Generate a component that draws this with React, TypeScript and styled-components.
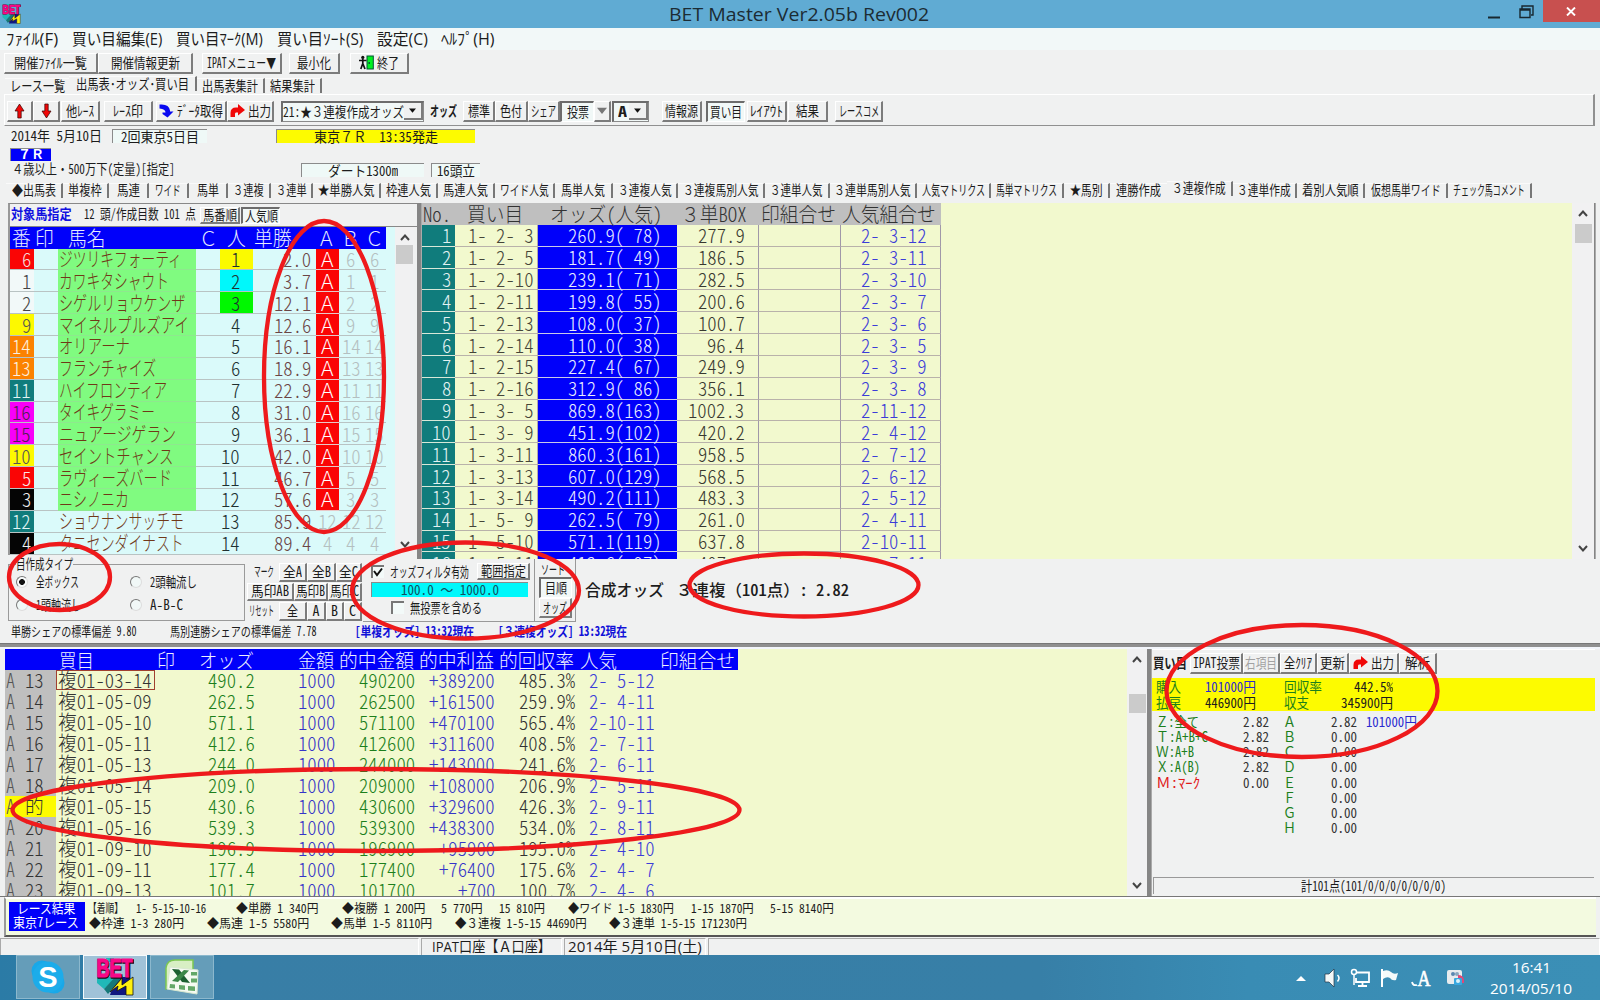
import React, { useLayoutEffect, useRef, useState } from "react";
import styled, { createGlobalStyle, css } from "styled-components";

const GlobalStyle = createGlobalStyle`
  *, *::before, *::after { box-sizing: border-box; }
  html, body { margin: 0; padding: 0; overflow: hidden; }
  body {
    font-family: "Noto Sans CJK JP", sans-serif;
    color: #1c1c1c;
    background: #f0f1f1;
  }
`;

const FACE = "#f0f1f1";
const PAPER = "#f2f9ce";
const BLUE = "#0000fa";
const GREEN = "#1c7f1c";
const TEAL = "#107c7c";

/* ---------- text squeezed to the cell grid of the bitmap font ---------- */

const FitBox = styled.span<{ $w: number; $ml: number }>`
  display: block;
  flex: none;
  width: ${(p) => p.$w}px;
  margin-left: ${(p) => p.$ml}px;
  line-height: 1;
`;

const FitInner = styled.span<{ $s: number; $c?: string; $b: number; $ui?: boolean }>`
  display: inline-block;
  white-space: pre;
  transform-origin: 0 50%;
  vertical-align: top;
  line-height: 1;
  font-family: ${(p) => (p.$ui ? '"Open Sans", "Noto Sans CJK JP", sans-serif' : "inherit")};
  font-size: ${(p) => p.$s}px;
  font-weight: ${(p) => p.$b};
  color: ${(p) => p.$c || "inherit"};
`;

const Half = styled.span`
  font-feature-settings: "hwid" 1;
`;

type TProps = { t: string; w: number; ml?: number; s?: number; c?: string; b?: number; ui?: boolean };

function T({ t, w, ml = 0, s = 14, c, b = 400, ui }: TProps) {
  const ref = useRef<HTMLSpanElement>(null);
  const [k, setK] = useState(1);
  useLayoutEffect(() => {
    if (ref.current && ref.current.offsetWidth) setK(w / ref.current.offsetWidth);
  }, [t, w, s, b]);
  return (
    <FitBox $w={w} $ml={ml}>
      <FitInner ref={ref} $s={s} $c={c} $b={b} $ui={ui} style={{ transform: `scaleX(${k})` }}>
        {ui ? t : t.split(/([\x20-\x7e]+)/).map((part, i) => (i % 2 ? <Half key={i}>{part}</Half> : part))}
      </FitInner>
    </FitBox>
  );
}

const units = (t: string) => [...t].reduce((n, ch) => n + (ch.charCodeAt(0) > 255 ? 2 : 1), 0);
const G = ({ t, c, ml = 0, b = 300 }: { t: string; c?: string; ml?: number; b?: number }) => (
  <T t={t} w={units(t) * 9.37} s={20} c={c} ml={ml} b={b} />
);

/* ---------- shared parts ---------- */

const Window = styled.div`
  width: 1600px;
  height: 1000px;
  overflow: hidden;
  position: relative;
  display: flex;
  flex-direction: column;
  background: ${FACE};
`;

const Line = styled.div<{ $h: number; $pl?: number; $pb?: number }>`
  display: flex;
  flex: none;
  align-items: center;
  height: ${(p) => p.$h}px;
  padding-left: ${(p) => p.$pl || 0}px;
  padding-bottom: ${(p) => p.$pb || 0}px;
`;

const Button = styled.div<{ $w: number; $h: number; $ml: number; $down?: boolean; $off?: boolean }>`
  display: flex;
  flex: none;
  align-items: center;
  justify-content: center;
  gap: 3px;
  width: ${(p) => p.$w}px;
  height: ${(p) => p.$h}px;
  margin-left: ${(p) => p.$ml}px;
  color: ${(p) => (p.$off ? "#a2a2a2" : "#1c1c1c")};
  background: ${(p) => (p.$down ? "#f1f8f7" : FACE)};
  ${(p) =>
    p.$down
      ? css`
          border-top: 2px solid #6c6c6c;
          border-left: 2px solid #6c6c6c;
          border-right: 1px solid #fff;
          border-bottom: 1px solid #fff;
        `
      : css`
          border-top: 1px solid #fff;
          border-left: 1px solid #fff;
          border-right: 2px solid #7c7c7c;
          border-bottom: 2px solid #7c7c7c;
        `}
`;

type BtnProps = {
  w: number; h?: number; ml?: number; t?: string; tw?: number; down?: boolean; off?: boolean;
  b?: number; children?: React.ReactNode;
};
const Btn = ({ w, h = 21, ml = 0, t, tw = 20, down, off, b, children }: BtnProps) => (
  <Button $w={w} $h={h} $ml={ml} $down={down} $off={off}>
    {children}
    {t && <T t={t} w={tw} b={b} />}
  </Button>
);

const Sunken = styled.div<{ $w: number; $ml: number; $bg: string; $h?: number }>`
  display: flex;
  flex: none;
  align-items: center;
  justify-content: center;
  width: ${(p) => p.$w}px;
  height: ${(p) => p.$h || 14}px;
  margin-left: ${(p) => p.$ml}px;
  background: ${(p) => p.$bg};
  border-top: 1px solid #8b8b8b;
  border-left: 1px solid #8b8b8b;
`;

const Combo = styled.div<{ $w: number; $ml: number }>`
  display: flex;
  flex: none;
  align-items: center;
  justify-content: space-between;
  width: ${(p) => p.$w}px;
  height: 21px;
  margin-left: ${(p) => p.$ml}px;
  border: 2px solid #6c6c6c;
  border-right: 1px solid #8b8b8b;
  border-bottom: 1px solid #8b8b8b;
  background: #f1f8f7;
`;

const Drop = styled.div`
  display: flex;
  align-items: center;
  justify-content: center;
  width: 19px;
  height: 17px;
  background: ${FACE};
  border-right: 2px solid #7c7c7c;
  border-bottom: 2px solid #7c7c7c;
`;

const DownTri = ({ w = 7, c = "#101010" }: { w?: number; c?: string }) => (
  <svg width={w} height={w * 0.75} viewBox="0 0 8 6"><path d="M0 0.5H8L4 5.5Z" fill={c} /></svg>
);

const OutArrow = () => (
  <svg width="15" height="16" viewBox="0 0 15 16">
    <path d="M0.5 14V10Q0.5 4.5 6 4.5H8V1L15 7L8 12.5V9.500H6Q5 9.500 5 11V14Z" fill="#f00808" />
  </svg>
);
const InArrow = () => (
  <svg width="15" height="16" viewBox="0 0 15 16">
    <path d="M0.5 1.500Q10 0.500 11 7.500V8.500H14.500L8.500 14.500L3.500 11V9.500H6.500Q6.500 6 0.500 5.500Z" fill="#0808f0" />
  </svg>
);
const RedArrow = ({ down }: { down?: boolean }) => (
  <svg width="11" height="16" viewBox="0 0 11 16">
    <path
      d={down ? "M3.8 1H7.2V8H10L5.5 15L1 8H3.8Z" : "M3.8 15H7.2V8H10L5.5 1L1 8H3.8Z"}
      fill="#f00808" stroke="#300" strokeWidth="0.7"
    />
  </svg>
);
const ExitIcon = () => (
  <svg width="15" height="15" viewBox="0 0 15 15">
    <rect x="8" y="1" width="6.3" height="13" fill="#00f020" stroke="#053" />
    <rect x="9.5" y="7" width="1.4" height="2" fill="#053" />
    <circle cx="3.8" cy="2.4" r="1.6" fill="#111" />
    <path d="M0 5.5H7.5M3.8 4V9M3.8 8.5L1.8 14M3.8 8.5L6 14" stroke="#111" strokeWidth="1.7" fill="none" />
  </svg>
);
const BetLogo = ({ w, h }: { w: number; h: number }) => (
  <svg width={w} height={h} viewBox="0 0 38 38" preserveAspectRatio="none">
    <path d="M10 0H18V4H10ZM1 19H20L8 31L1 25Z" fill="#20b8b8" />
    <path d="M20 19H34V22L30 37H14Z" fill="#101880" />
    <path d="M8 31L20 18H27L12 36Z" fill="#157878" />
    <text x="19.500" y="19.500" textAnchor="middle" textLength="37" lengthAdjust="spacingAndGlyphs"
      fontFamily="Liberation Sans" fontWeight="700" fontSize="25" fill="#200818" stroke="#200818" strokeWidth="1.500">BET</text>
    <text x="18.500" y="18.500" textAnchor="middle" textLength="36" lengthAdjust="spacingAndGlyphs"
      fontFamily="Liberation Sans" fontWeight="700" fontSize="25" fill="#f80888" stroke="#f80888" strokeWidth="1.200">BET</text>
    <path d="M14 34L26 20L26 27L37 19V37H30V28L21 33L22 28Z" fill="#fff010" stroke="#111" strokeWidth="0.800" />
  </svg>
);

/* ---------- title bar and menus ---------- */

const TitleBar = styled.div`
  display: flex;
  flex: none;
  align-items: center;
  height: 28px;
  padding: 0 0 1px 2px;
  background: #60abd3;
  color: #1c2c34;
`;
const CloseBox = styled.div`
  display: flex;
  align-items: center;
  justify-content: center;
  align-self: flex-start;
  width: 58px;
  height: 22px;
  margin-left: 9px;
  background: #c8504f;
`;
const Caption = styled.svg`
  flex: none;
  margin-left: 555px;
`;
const MenuBar = styled.div`
  display: flex;
  flex: none;
  align-items: center;
  height: 22px;
  padding: 2px 0 0 6px;
  background: #f2f8f8;
`;
const Tab = styled.div<{ $w: number; $up?: boolean; $line?: boolean }>`
  display: flex;
  flex: none;
  align-items: center;
  justify-content: center;
  width: ${(p) => p.$w}px;
  height: 15px;
  margin-bottom: ${(p) => (p.$up ? 3 : 0)}px;
  border-right: ${(p) => (p.$line === false ? "0" : "2px solid #777")};
  border-top: 1px solid #fafafa;
`;
const ToolFrame = styled.div`
  display: flex;
  flex: none;
  align-items: center;
  height: 32px;
  margin: 0 5px 0 4px;
  padding: 2px 0 0 2px;
  border-top: 1px solid #fff;
  border-left: 1px solid #fff;
  border-right: 2px solid #909090;
  border-bottom: 1px solid #909090;
`;

const MENUS: [string, number, number][] = [
  ["ﾌｧｲﾙ(F)", 52, 0], ["買い目編集(E)", 90, 14], ["買い目ﾏｰｸ(M)", 87, 14],
  ["買い目ｿｰﾄ(S)", 86, 14], ["設定(C)", 51, 14], ["ﾍﾙﾌﾟ(H)", 54, 13],
];

/* label, label width, tab width */
const ODDS_TABS: [string, number, number][] = [
  ["◆出馬表", 44, 57], ["単複枠", 34, 46], ["馬連", 23, 40], ["ワイド", 26, 40], ["馬単", 22, 39],
  ["３連複", 31, 43], ["３連単", 31, 42], ["★単勝人気", 57, 68], ["枠連人気", 45, 57], ["馬連人気", 45, 57],
  ["ワイド人気", 49, 60], ["馬単人気", 44, 58], ["３連複人気", 54, 65], ["３連複馬別人気", 76, 87],
  ["３連単人気", 53, 65], ["３連単馬別人気", 77, 87], ["人気マトリクス", 63, 74], ["馬単マトリクス", 61, 73],
  ["★馬別", 33, 46], ["連勝作成", 45, 57], ["３連複作成", 54, 66], ["３連単作成", 54, 64],
  ["着別人気順", 57, 68], ["仮想馬単ワイド", 70, 83], ["チェック馬コメント", 72, 84],
];

/* ---------- upper tables ---------- */

const Row = styled.div<{ $h: number; $bg?: string }>`
  display: flex;
  flex: none;
  height: ${(p) => p.$h}px;
  background: ${(p) => p.$bg || "transparent"};
`;
const Cell = styled.div<{ $w: number; $bg?: string; $rule?: string; $side?: string; $at?: string; $pr?: number }>`
  display: flex;
  flex: none;
  align-items: center;
  justify-content: ${(p) => p.$at || "center"};
  width: ${(p) => p.$w}px;
  padding-right: ${(p) => p.$pr || 0}px;
  background: ${(p) => p.$bg || "transparent"};
  border-bottom: ${(p) => (p.$rule ? `1px solid ${p.$rule}` : "0")};
  border-right: ${(p) => (p.$side ? `1px solid ${p.$side}` : "0")};
`;
const Clip = styled.div<{ $w: number; $bg: string; $ml?: number }>`
  flex: none;
  width: ${(p) => p.$w}px;
  margin-left: ${(p) => p.$ml || 0}px;
  overflow: hidden;
  background: ${(p) => p.$bg};
`;
const Main = styled.div`
  display: flex;
  flex: none;
  height: 356px;
`;
const HorsePanel = styled.div`
  flex: none;
  width: 409px;
  height: 352px;
  margin-left: 8px;
  border-top: 1px solid #888;
  border-left: 2px solid #999;
`;
const HorseBody = styled.div`
  display: flex;
  height: 329px;
  border-top: 1px solid #888;
`;
const ScrollBar = styled.div<{ $w: number; $bg?: string }>`
  display: flex;
  flex: none;
  flex-direction: column;
  justify-content: space-between;
  align-items: center;
  width: ${(p) => p.$w}px;
  padding: 7px 0;
  background: ${(p) => p.$bg || "#f1f1f2"};
`;
const Thumb = styled.div<{ $mt: number }>`
  width: 17px;
  height: 19px;
  margin-top: ${(p) => p.$mt}px;
  background: #cbcbcb;
`;
const Col = styled.div`
  display: flex;
  flex-direction: column;
  align-items: center;
`;
const Chevron = ({ down }: { down?: boolean }) => (
  <svg width="10" height="7" viewBox="0 0 10 7">
    <path d={down ? "M1 1L5 5.5L9 1" : "M1 6L5 1.5L9 6"} fill="none" stroke="#444" strokeWidth="2" />
  </svg>
);
const Scroll = ({ w, mt }: { w: number; mt: number }) => (
  <ScrollBar $w={w}>
    <Col><Chevron /><Thumb $mt={mt} /></Col>
    <Chevron down />
  </ScrollBar>
);
const VSplit = styled.div<{ $w: number }>`
  flex: none;
  width: ${(p) => p.$w}px;
  background: #858585;
  border-right: 1px solid #aaa;
`;

const HORSES: [string, string, string, string, string, string][] = [
  ["6", "#fa0505", "#f4dcdc", "ジツリキフォーティ", "1", "2.0"],
  ["1", "#f2f9f9", "#444", "カワキタシャウト", "2", "3.7"],
  ["2", "#f2f9f9", "#444", "シゲルリョウケンザ", "3", "12.1"],
  ["9", "#fdf900", "#555", "マイネルプルズアイ", "4", "12.6"],
  ["14", "#fb8200", "#fbeedd", "オリアーナ", "5", "16.1"],
  ["13", "#fb8200", "#fbeedd", "フランチャイズ", "6", "18.9"],
  ["11", TEAL, "#e0f4f4", "ハイフロンティア", "7", "22.9"],
  ["16", "#f800f8", "#502050", "タイキグラミー", "8", "31.0"],
  ["15", "#f800f8", "#502050", "ニュアージゲラン", "9", "36.1"],
  ["10", "#fdf900", "#555", "セイントチャンス", "10", "42.0"],
  ["5", "#fa0505", "#fbe4e4", "ラヴィーズバード", "11", "46.7"],
  ["3", "#050505", "#f0f0f0", "ニシノニカ", "12", "57.6"],
  ["12", TEAL, "#e0f4f4", "ショウナンサッチモ", "13", "85.9"],
  ["4", "#050505", "#f0f0f0", "タニセンダイナスト", "14", "89.4"],
];
const NAME_W = [123, 110, 126, 130, 71, 97, 108, 96, 117, 114, 113, 70, 125, 125];
const POP_BG = ["#fbfa00", "#00f8fb", "#00f800"];
const CYAN = "#dafafa";
const RULE = "#b9c3c3";

const ODDS: [string, string, string, string][] = [
  ["1- 2- 3", "260.9( 78)", "277.9", "2- 3-12"],
  ["1- 2- 5", "181.7( 49)", "186.5", "2- 3-11"],
  ["1- 2-10", "239.1( 71)", "282.5", "2- 3-10"],
  ["1- 2-11", "199.8( 55)", "200.6", "2- 3- 7"],
  ["1- 2-13", "108.0( 37)", "100.7", "2- 3- 6"],
  ["1- 2-14", "110.0( 38)", "96.4", "2- 3- 5"],
  ["1- 2-15", "227.4( 67)", "249.9", "2- 3- 9"],
  ["1- 2-16", "312.9( 86)", "356.1", "2- 3- 8"],
  ["1- 3- 5", "869.8(163)", "1002.3", "2-11-12"],
  ["1- 3- 9", "451.9(102)", "420.2", "2- 4-12"],
  ["1- 3-11", "860.3(161)", "958.5", "2- 7-12"],
  ["1- 3-13", "607.0(129)", "568.5", "2- 6-12"],
  ["1- 3-14", "490.2(111)", "483.3", "2- 5-12"],
  ["1- 5- 9", "262.5( 79)", "261.0", "2- 4-11"],
  ["1- 5-10", "571.1(119)", "637.8", "2-10-11"],
  ["1- 5-11", "412.6( 97)", "407.1", "2- 7-11"],
];

function HorseTable() {
  const head: [string, number][] = [
    ["番", 22], ["印", 25], ["馬名", 60], ["", 79], ["Ｃ", 24], ["人", 33], ["単勝", 40], ["", 21], ["Ａ", 24], ["Ｂ", 24], ["Ｃ", 24],
  ];
  return (
    <Clip $w={385} $bg={CYAN}>
      <Row $h={21.5}>
        {head.map(([t, w], i) => (
          <Cell key={i} $w={w} $bg={BLUE}>{t && <G t={t} c="#e8ecff" />}</Cell>
        ))}
      </Row>
      {HORSES.map(([no, bg, fg, name, pop, odds], i) => {
        const on = i < 12;
        return (
          <Row key={no} $h={21.87}>
            <Cell $w={24} $bg={bg} $rule={RULE} $at="flex-end" $pr={3}><G t={no} c={fg} /></Cell>
            <Cell $w={24} $rule={RULE} />
            <Cell $w={138} $bg={on ? "#80fb80" : undefined} $rule={on ? "#8ee88e" : RULE} $at="flex-start">
              <T t={name} w={NAME_W[i]} s={20} c="#703818" b={300} ml={1} />
            </Cell>
            <Cell $w={24} $rule={RULE} />
            <Cell $w={33} $bg={POP_BG[i]} $rule={RULE} $at="flex-end" $pr={13}>
              <G t={pop} c="#203030" />
            </Cell>
            <Cell $w={63} $rule={RULE} $at="flex-end" $pr={5}><G t={odds} c="#6b4545" /></Cell>
            {[23, 24, 23].map((w, k) =>
              on && k === 0 ? (
                <Cell key={k} $w={w} $bg="#fa0505" $rule="#e8c8c8"><G t="Ａ" c="#fff" /></Cell>
              ) : (
                <Cell key={k} $w={w} $rule={RULE}><G t={no} c="#b4bfc0" /></Cell>
              )
            )}
          </Row>
        );
      })}
    </Clip>
  );
}

function OddsTable() {
  const head: [string, number, number][] = [
    ["No.", 33, 3], ["買い目", 83, 2], ["オッズ(人気)", 138.5, 3], ["３単BOX", 82, 8], ["印組合せ", 82, 3], ["人気組合せ", 100.5, 3],
  ];
  return (
    <Clip $w={1150} $bg={PAPER}>
      <Row $h={22}>
        {head.map(([t, w, pr]) => (
          <Cell key={t} $w={w} $bg="#bfbfbf" $pr={pr}><G t={t} c="#333" /></Cell>
        ))}
      </Row>
      {ODDS.map(([a, b, c, d], i) => (
        <Row key={a} $h={21.83}>
          <Cell $w={33} $bg={TEAL} $rule="#d8e8d8" $at="flex-end" $pr={4}><G t={String(i + 1)} c="#e2f2f2" /></Cell>
          <Cell $w={83} $rule="#b9b2aa" $side="#b0a8b0" $at="flex-end" $pr={3}><G t={a} c="#454538" /></Cell>
          <Cell $w={138.5} $bg={BLUE} $rule="#c8c8e8" $at="flex-end" $pr={15}><G t={b} c="#e8ecff" /></Cell>
          <Cell $w={82} $rule="#b9b2aa" $side="#a098a8" $at="flex-end" $pr={13}><G t={c} c="#383830" /></Cell>
          <Cell $w={82} $rule="#b9b2aa" $side="#a098a8" />
          <Cell $w={100.5} $rule="#b9b2aa" $side="#a098a8" $at="flex-end" $pr={13}><G t={d} c="#3c3cd8" /></Cell>
        </Row>
      ))}
    </Clip>
  );
}

/* ---------- control strip ---------- */

const Strip = styled.div`
  display: flex;
  flex: none;
  height: 63px;
`;
const Group = styled.fieldset`
  flex: none;
  width: 237px;
  height: 64px;
  margin: -2px 0 0 8px;
  padding: 0 0 0 7px;
  border: 1px solid #9a9a9a;
`;
const Legend = styled.legend`
  height: 14px;
  padding: 0;
`;
const RadioDot = styled.span<{ $on?: boolean; $ml?: number }>`
  flex: none;
  width: 12px;
  height: 12px;
  margin-left: ${(p) => p.$ml || 0}px;
  border-radius: 50%;
  border: 1px solid #777;
  border-right-color: #ddd;
  border-bottom-color: #ddd;
  background: ${(p) => (p.$on ? "radial-gradient(circle, #111 0 2.6px, #f8fbfb 3.2px)" : "#f1f8f7")};
`;
const Marks = styled.div`
  flex: none;
  width: 118px;
  padding: 3px 0 0 2px;
`;
const Filter = styled.div`
  flex: none;
  width: 172px;
  padding: 4px 0 0 8px;
  border-right: 1px solid #999;
  border-bottom: 1px solid #999;
`;
const SortBox = styled.div`
  flex: none;
  width: 41px;
  padding: 4px 0 0 4px;
  border-right: 1px solid #999;
  border-bottom: 1px solid #999;
`;
const Check = styled.span<{ $ml?: number }>`
  display: flex;
  flex: none;
  width: 13px;
  height: 13px;
  margin-left: ${(p) => p.$ml || 0}px;
  background: #f3faf9;
  border-top: 2px solid #777;
  border-left: 2px solid #777;
`;
const Total = styled.div`
  display: flex;
  align-items: center;
  padding: 0 0 4px 9px;
`;
const HSplit = styled.div`
  flex: none;
  height: 6px;
  background: #8f8f8f;
  border-top: 1px solid #777;
  border-bottom: 2px solid #f2f5fb;
`;

/* ---------- bet list and summary ---------- */

const Lower = styled.div`
  display: flex;
  flex: none;
  height: 248px;
  padding: 0 5px;
  border-bottom: 1px solid #777;
`;
const Framed = styled.div<{ $on?: boolean }>`
  display: flex;
  align-items: center;
  height: 20px;
  width: 99px;
  padding-left: 1px;
  border: 1px solid ${(p) => (p.$on ? "#a04030" : "transparent")};
`;
const BETS: [string, string, string, string, string, string, string][] = [
  ["13", "複01-03-14", "490.2", "490200", "+389200", "485.3%", "2- 5-12"],
  ["14", "複01-05-09", "262.5", "262500", "+161500", "259.9%", "2- 4-11"],
  ["15", "複01-05-10", "571.1", "571100", "+470100", "565.4%", "2-10-11"],
  ["16", "複01-05-11", "412.6", "412600", "+311600", "408.5%", "2- 7-11"],
  ["17", "複01-05-13", "244.0", "244000", "+143000", "241.6%", "2- 6-11"],
  ["18", "複01-05-14", "209.0", "209000", "+108000", "206.9%", "2- 5-11"],
  ["的", "複01-05-15", "430.6", "430600", "+329600", "426.3%", "2- 9-11"],
  ["20", "複01-05-16", "539.3", "539300", "+438300", "534.0%", "2- 8-11"],
  ["21", "複01-09-10", "196.9", "196900", "+95900", "195.0%", "2- 4-10"],
  ["22", "複01-09-11", "177.4", "177400", "+76400", "175.6%", "2- 4- 7"],
  ["23", "複01-09-13", "101.7", "101700", "+700", "100.7%", "2- 4- 6"],
];
const BET_HEAD: [string, number, number][] = [
  ["買目", 35, 54], ["印", 18, 63], ["オッズ", 55, 24], ["金額", 36, 44], ["的中金額", 75, 5],
  ["的中利益", 75, 5], ["的回収率", 75, 5], ["人気", 37, 6], ["印組合せ", 75, 43],
];

function BetTable() {
  return (
    <Clip $w={1122} $bg={PAPER}>
      <Row $h={21}>
        <Cell $w={733} $bg={BLUE} $at="flex-start">
          {BET_HEAD.map(([t, w, ml]) => <T key={t} t={t} w={w} ml={ml} s={19} c="#eef0ff" b={300} />)}
        </Cell>
      </Row>
      {BETS.map(([no, code, odds, pay, gain, rate, pop], i) => {
        const hit = no === "的";
        return (
          <Row key={code} $h={20.95}>
            <Cell $w={51} $bg={hit ? "#fdfb00" : "#bfbfbf"} $at="flex-start">
              <T t="A" w={9} s={20} ml={1} c="#555" b={300} /><G t={no} ml={10} c="#333" />
            </Cell>
            <Cell $w={99} $at="flex-start"><Framed $on={i === 0}><G t={code} c="#333" /></Framed></Cell>
            <Cell $w={100} $at="flex-end"><G t={odds} c={GREEN} /></Cell>
            <Cell $w={80} $at="flex-end"><G t="1000" c="#3535c8" /></Cell>
            <Cell $w={80} $at="flex-end"><G t={pay} c={GREEN} /></Cell>
            <Cell $w={80} $at="flex-end"><G t={gain} c="#3535c8" /></Cell>
            <Cell $w={80} $at="flex-end"><G t={rate} c="#333" /></Cell>
            <Cell $w={80} $at="flex-end"><G t={pop} c="#3c3cd8" /></Cell>
          </Row>
        );
      })}
    </Clip>
  );
}

const Summary = styled.div`
  display: flex;
  flex: 1;
  flex-direction: column;
  border-top: 1px solid #fff;
`;
const Yellow = styled.div`
  flex: none;
  height: 33px;
  margin: 2px 0 3px;
  background: #fdfb00;
`;
const Foot = styled.div`
  display: flex;
  flex: none;
  align-items: center;
  height: 17px;
  margin: auto 1px 2px 1px;
  padding-left: 147px;
  border-top: 1px solid #999;
  border-left: 1px solid #999;
`;
/* key, key width, odds */
const GROUPS: [string, number, string][] = [
  ["Ｚ:全て", 43, "2.82"], ["Ｔ:A+B+C", 52, "2.82"], ["Ｗ:A+B", 38, "2.82"], ["Ｘ:A(B)", 44, "2.82"],
  ["Ｍ:ﾏｰｸ", 44, "0.00"], ["", 0, ""], ["", 0, ""], ["", 0, ""],
];

function BetSummary() {
  return (
    <Summary>
      <Line $h={26} $pl={1}>
        <T t="買い目" w={34} b={700} />
        <Btn ml={3} w={53} t="IPAT投票" tw={47} />
        <Btn w={37} t="右項目" tw={32} off />
        <Btn w={37} t="全ｸﾘｱ" tw={28} />
        <Btn w={32} t="更新" tw={25} />
        <Btn w={50} t="出力" tw={23}><OutArrow /></Btn>
        <Btn w={38} t="解析" tw={25} />
      </Line>
      <Yellow>
        <Line $h={18} $pl={4}>
          <T t="購入" w={25} c={GREEN} /><T t="101000円" w={51} ml={24} c="#2a2ad0" />
          <T t="回収率" w={38} ml={28} c={GREEN} /><T t="442.5%" w={39} ml={32} />
        </Line>
        <Line $h={13} $pl={4}>
          <T t="払戻" w={25} c={GREEN} /><T t="446900円" w={51} ml={24} />
          <T t="収支" w={25} ml={28} c={GREEN} /><T t="345900円" w={52} ml={32} />
        </Line>
      </Yellow>
      {GROUPS.map(([k, kw, v], i) => (
        <Line key={i} $h={15.25} $pl={4}>
          <Cell $w={87} $at="flex-start">{k && <T t={k} w={kw} c={i === 4 ? "#e01818" : GREEN} />}</Cell>
          <Cell $w={26}>{v && <T t={v} w={26} c="#333" />}</Cell>
          <T t={"ＡＢＣＤＥＦＧＨ"[i]} w={13} ml={14} c={GREEN} />
          <T t={i === 0 ? "2.82" : "0.00"} w={26} ml={35} c="#333" />
          {i === 0 && <T t="101000円" w={51} ml={9} c="#2a2ad0" />}
        </Line>
      ))}
      <Foot><T t="計101点(101/0/0/0/0/0/0/0)" w={145} /></Foot>
    </Summary>
  );
}

/* ---------- results, status bar, taskbar ---------- */

const Results = styled.div`
  display: flex;
  flex: none;
  height: 40px;
  margin: 0 4px;
  padding: 3px 0 0 3px;
  background: #f3fae0;
  border-top: 2px solid #fff;
  border-left: 2px solid #999;
  border-bottom: 2px solid #555;
`;
const ResultBadge = styled.div`
  flex: none;
  width: 76px;
  height: 29px;
  padding: 0 4px;
  background: ${BLUE};
`;
const StatusBar = styled.div`
  display: flex;
  flex: none;
  height: 18px;
  padding-top: 1px;
`;
const StatusCell = styled.div<{ $w: number }>`
  display: flex;
  flex: none;
  align-items: center;
  width: ${(p) => p.$w}px;
  margin-right: 2px;
  border-top: 1px solid #aaa;
  border-left: 1px solid #aaa;
  border-right: 1px solid #fff;
`;
const TaskBar = styled.div`
  display: flex;
  flex: none;
  height: 45px;
  padding-left: 16px;
  background: linear-gradient(90deg, #2b7ba6 0%, #387ea6 14%, #377fa7 65%, #398cb4 78%, #3b8fb6 100%);
`;
const TaskItem = styled.div<{ $on?: boolean }>`
  display: flex;
  flex: none;
  align-items: center;
  justify-content: center;
  width: 64px;
  height: 44px;
  margin-right: 3px;
  background: ${(p) => (p.$on ? "#a0c2d8" : "#659db9")};
  border: 1px solid ${(p) => (p.$on ? "#f4fafc" : "#8cb8cd")};
`;
const Tray = styled.div`
  display: flex;
  align-items: center;
  margin-left: auto;
  margin-right: 28px;
`;
const Clock = styled.div`
  display: flex;
  flex-direction: column;
  align-items: center;
  gap: 5px;
  width: 82px;
  margin-left: 26px;
  padding-top: 4px;
  color: #fff;
`;
const Marker = styled.svg`
  position: absolute;
  left: 0;
  top: 0;
  pointer-events: none;
`;

/* text, width, left gap */
const RESULT1: [string, number, number][] = [
  ["【着順】", 35, 3], ["1- 5-15-10-16", 70, 13], ["◆単勝 1 340円", 83, 30], ["◆複勝 1 200円", 84, 23],
  ["5 770円", 42, 15], ["15 810円", 46, 16], ["◆ワイド 1-5 1830円", 106, 23], ["1-15 1870円", 63, 17], ["5-15 8140円", 64, 16],
];
const RESULT2: [string, number, number][] = [
  ["◆枠連 1-3 280円", 95, 4], ["◆馬連 1-5 5580円", 102, 23], ["◆馬単 1-5 8110円", 101, 22],
  ["◆３連複 1-5-15 44690円", 132, 23], ["◆３連単 1-5-15 171230円", 138, 22],
];
const RINGS = [
  [324, 376.5, 60, 155.5], [59.5, 577, 50.5, 33], [465.5, 590.5, 113.5, 48],
  [804, 585, 114.5, 31.5], [376, 810, 363.5, 41], [1302, 691, 135.5, 66],
];

export default function App() {
  return (
    <Window>
      <GlobalStyle />
      <TitleBar>
        <BetLogo w={19} h={20} />
        <T t="BET Master Ver2.05b Rev002" w={260} ml={648} s={18} ui />
        <Caption width="50" height="20" viewBox="0 0 50 20">
          <path d="M4 13.500H16" stroke="#182830" strokeWidth="2" />
          <path d="M38 4.500V2H49V11H47M36 5H46V13.500H36Z M36 6H46" stroke="#182830" strokeWidth="1.4" fill="none" />
        </Caption>
        <CloseBox>
          <svg width="10" height="9" viewBox="0 0 10 9"><path d="M1 0.500L9 8.500M9 0.500L1 8.500" stroke="#fff" strokeWidth="1.9" /></svg>
        </CloseBox>
      </TitleBar>
      <MenuBar>
        {MENUS.map(([t, w, ml]) => <T key={t} t={t} w={w} ml={ml} s={15.5} ui />)}
      </MenuBar>
      <Line $h={26} $pl={4}>
        <Btn w={94} t="開催ﾌｧｲﾙ一覧" tw={73} />
        <Btn w={95} t="開催情報更新" tw={69} />
        <Btn ml={9} w={80} t="IPATメニュー▼" tw={69} />
        <Btn ml={7} w={51} t="最小化" tw={34} />
        <Btn ml={10} w={59} t="終了" tw={22}><ExitIcon /></Btn>
      </Line>
      <Line $h={18} $pl={5}>
        <Tab $w={64} $line={false}><T t="レース一覧" w={55} /></Tab>
        <Tab $w={128} $up><T t="出馬表･オッズ･買い目" w={113} /></Tab>
        <Tab $w={68}><T t="出馬表集計" w={56} /></Tab>
        <Tab $w={57}><T t="結果集計" w={45} /></Tab>
      </Line>
      <ToolFrame>
        <Btn w={26}><RedArrow /></Btn>
        <Btn w={27}><RedArrow down /></Btn>
        <Btn ml={1} w={39} t="他ﾚｰｽ" tw={28} />
        <Btn ml={4} w={49} t="ﾚｰｽ印" tw={30} />
        <Btn ml={3} w={71} t="ﾃﾞｰﾀ取得" tw={46}><InArrow /></Btn>
        <Btn w={47} t="出力" tw={23}><OutArrow /></Btn>
        <Combo $w={143} $ml={7}><T t="21:★３連複作成オッズ" w={121} ml={0} /><Drop><DownTri /></Drop></Combo>
        <T t="オッズ" w={27} ml={6} b={700} />
        <Btn ml={6} w={32} t="標準" tw={22} />
        <Btn w={33} t="色付" tw={22} />
        <Btn w={32} t="シェア" tw={25} />
        <Btn w={34} t="投票" tw={22} down />
        <Btn w={17}><DownTri w={10} c="#777" /></Btn>
        <Combo $w={37} $ml={1}><T t="A" w={9} ml={4} b={700} /><Drop><DownTri /></Drop></Combo>
        <Btn ml={13} w={40} t="情報源" tw={33} />
        <Btn ml={4} w={39} t="買い目" tw={32} down />
        <Btn ml={2} w={40} t="ﾚｲｱｳﾄ" tw={33} />
        <Btn ml={1} w={40} t="結果" tw={23} />
        <Btn ml={7} w={48} t="レースコメ" tw={40} />
      </ToolFrame>
      <Line $h={20} $pl={11}>
        <T t="2014年 5月10日" w={91} />
        <Sunken $ml={10} $w={95} $bg="#eff9f7"><T t="2回東京5日目" w={78} /></Sunken>
        <Sunken $ml={69} $w={199} $bg="#fdfb00"><T t="東京７Ｒ　13:35発走" w={124} /></Sunken>
      </Line>
      <Line $h={17} $pl={10}>
        <Sunken $ml={0} $w={41} $bg={BLUE} $h={13}><T t="７Ｒ" w={26} s={13} c="#fff" b={700} /></Sunken>
      </Line>
      <Line $h={14} $pl={12}>
        <T t="４歳以上・500万下(定量)[指定]" w={163} s={13.5} />
        <Sunken $ml={126} $w={123} $bg="#eff9f7"><T t="ダート1300m" w={70} /></Sunken>
        <Sunken $ml={7} $w={49} $bg="#eff9f7"><T t="16頭立" w={38} /></Sunken>
      </Line>
      <Line $h={26} $pl={6}>
        {ODDS_TABS.map(([t, w, tw], i) => (
          <Tab key={t} $w={tw} $up={i === 20} $line={i !== 19}><T t={t} w={w} s={13.5} /></Tab>
        ))}
      </Line>
      <Main>
        <HorsePanel>
          <Line $h={22} $pl={1}>
            <T t="対象馬指定" w={61} c="#1010e0" b={700} s={13.5} />
            <T t="12 頭/作成目数 101 点" w={112} ml={12} s={13.5} />
            <Btn ml={4} w={40} h={17} t="馬番順" tw={34} />
            <Btn ml={1} w={39} h={17} t="人気順" tw={33} down />
          </Line>
          <HorseBody><HorseTable /><Scroll w={19} mt={4} /></HorseBody>
        </HorsePanel>
        <VSplit $w={5} />
        <OddsTable />
        <Scroll w={22} mt={7} />
        <VSplit $w={2} />
      </Main>
      <Strip>
        <Group>
          <Legend><T t="目作成タイプ" w={57} s={13.5} /></Legend>
          <Line $h={22}>
            <RadioDot $on /><T t="全ボックス" w={43} ml={8} />
            <RadioDot $ml={51} /><T t="2頭軸流し" w={47} ml={8} />
          </Line>
          <Line $h={24}>
            <RadioDot /><T t="1頭軸流し" w={45} ml={8} />
            <RadioDot $ml={49} /><T t="A-B-C" w={33} ml={8} />
          </Line>
        </Group>
        <Marks>
          <Line $h={20}>
            <T t="マーク" w={20} ml={7} s={13} />
            <Btn ml={5} w={28} h={19} t="全A" tw={19} /><Btn w={29} h={19} t="全B" tw={19} /><Btn w={26} h={19} t="全C" tw={19} />
          </Line>
          <Line $h={19}>
            <Btn w={47} h={18} t="馬印AB" tw={38} /><Btn w={34} h={18} t="馬印B" tw={29} /><Btn w={34} h={18} t="馬印C" tw={29} />
          </Line>
          <Line $h={20}>
            <T t="リセット" w={25} ml={2} s={13} />
            <Btn ml={5} w={28} h={19} t="全" tw={11} /><Btn w={19} h={19} t="A" tw={7} /><Btn w={18} h={19} t="B" tw={7} /><Btn w={18} h={19} t="C" tw={7} />
          </Line>
        </Marks>
        <Filter>
          <Line $h={19} $pb={2}>
            <Check><svg width="10" height="10" viewBox="0 0 10 10"><path d="M1 4L4 8L9 1.500" fill="none" stroke="#111" strokeWidth="2" /></svg></Check>
            <T t="オッズフィルタ有効" w={79} ml={6} />
            <Btn ml={8} w={53} h={17} t="範囲指定" tw={45} />
          </Line>
          <Sunken $w={157} $ml={0} $h={15} $bg="#00f8fb"><T t="100.0 ～ 1000.0" w={98} c="#105060" /></Sunken>
          <Line $h={21} $pl={20}>
            <Check /><T t="無投票を含める" w={72} ml={6} />
          </Line>
        </Filter>
        <SortBox>
          <Line $h={14} $pl={2}><T t="ソート" w={24} s={13} /></Line>
          <Btn w={33} h={21} t="目順" tw={22} down />
          <Btn w={33} h={20} t="オッズ" tw={24} />
        </SortBox>
        <Total>
          <T t="合成オッズ" w={79} s={16} b={500} />
          <T t="３連複（101点）: 2.82" w={173} ml={12} s={16} b={500} />
        </Total>
      </Strip>
      <Line $h={21} $pl={11} $pb={1}>
        <T t="単勝シェアの標準偏差 9.80" w={126} s={13} />
        <T t="馬別連勝シェアの標準偏差 7.78" w={147} ml={33} s={13} />
        <T t="[単複オッズ] 13:32現在" w={119} ml={38} s={13} c="#1010d8" b={700} />
        <T t="[３連複オッズ] 13:32現在" w={129} ml={24} s={13} c="#1010d8" b={700} />
      </Line>
      <HSplit />
      <Lower>
        <BetTable />
        <Scroll w={20} mt={31} />
        <VSplit $w={5} />
        <BetSummary />
      </Lower>
      <Results>
        <ResultBadge>
          <Line $h={14} $pl={4}><T t="レース結果" w={58} s={13} c="#fff" /></Line>
          <Line $h={14}><T t="東京7レース" w={66} s={13} c="#fff" /></Line>
        </ResultBadge>
        <div>
          <Line $h={15}>{RESULT1.map(([t, w, ml]) => <T key={t} t={t} w={w} ml={ml} s={12.5} />)}</Line>
          <Line $h={15}>{RESULT2.map(([t, w, ml]) => <T key={t} t={t} w={w} ml={ml} s={12.5} />)}</Line>
        </div>
      </Results>
      <StatusBar>
        <StatusCell $w={419} />
        <StatusCell $w={141}><T t="IPAT口座【Ａ口座】" w={119} ml={10} s={15} ui /></StatusCell>
        <StatusCell $w={142}><T t="2014年 5月10日(土)" w={134} ml={3} s={15} ui /></StatusCell>
        <StatusCell $w={892} />
      </StatusBar>
      <TaskBar>
        <TaskItem>
          <svg width="36" height="38" viewBox="0 0 36 38">
            <circle cx="12" cy="13" r="10.500" fill="#18a8e8" /><circle cx="24" cy="25" r="10.500" fill="#18a8e8" />
            <circle cx="18" cy="19" r="15.500" fill="#1cacea" />
            <text x="18" y="29" textAnchor="middle" fontFamily="Liberation Sans" fontWeight="700" fontSize="29" fill="#fff">S</text>
          </svg>
        </TaskItem>
        <TaskItem $on><BetLogo w={38} h={38} /></TaskItem>
        <TaskItem>
          <svg width="38" height="38" viewBox="0 0 38 38">
            <path d="M3 31V10Q4 2 12 2H30V20L3 31Z" fill="#d8efc4" stroke="#7cc850" strokeWidth="1.500" />
            <path d="M7 9L35 12L34 36L4 31Z" fill="#f6fbf2" stroke="#d8e8d0" />
            <path d="M9 11L16 11.500L27 25L19 24Z" fill="#1c6030" /><path d="M21 12L26 12.500L15 24L9 23Z" fill="#3c8848" />
            <path d="M28 14H34V17.500H28ZM28 20.500H34V24.500H28ZM7 26L12 26.500V30.500L6.500 30ZM16 27L22 27.500V32L16 31.300ZM25 28L32 28.500V33L25 32.500Z" fill="#64a868" />
          </svg>
        </TaskItem>
        <Tray>
          <svg width="174" height="22" viewBox="0 0 174 22">
            <path d="M6 14L11 9L16 14Z" fill="#fff" />
            <path d="M35 7H39L44 2V20L39 15H35Z" fill="#f4f8f8" stroke="#234" strokeWidth="0.700" />
            <path d="M47.500 8Q50.500 11 47.500 14.500" fill="none" stroke="#fff" strokeWidth="1.500" />
            <path d="M67 5.500H79V15H66V11M72.500 15V19M68 19H77" fill="none" stroke="#fff" strokeWidth="1.800" />
            <circle cx="64" cy="5" r="2.500" fill="none" stroke="#fff" strokeWidth="1.500" /><path d="M64 8V18" stroke="#fff" strokeWidth="1.500" />
            <path d="M92 2V20" stroke="#fff" strokeWidth="2" />
            <path d="M93 4Q98 2 101 5Q104 8 108 6L106 13Q102 14 100 11Q97 9 93 12Z" fill="#f4fafa" />
            <path d="M122 15Q123 19 127 18" stroke="#fff" strokeWidth="1.800" fill="none" />
            <text x="134" y="18.500" textAnchor="middle" textLength="13" lengthAdjust="spacingAndGlyphs" fontFamily="Liberation Serif" fontSize="23" fill="#fff" stroke="#fff" strokeWidth="0.700">A</text>
            <rect x="157" y="3" width="15" height="14" rx="2" fill="#e8ecee" />
            <circle cx="163" cy="7" r="2" fill="#5a88b0" /><circle cx="167" cy="7" r="2" fill="#88a8c0" />
            <path d="M168 8Q175 8 174 16H168Z" fill="#e04878" />
            <rect x="164" y="11" width="8" height="7" rx="1" fill="#38a8e0" /><circle cx="168" cy="14" r="2" fill="#d8f0fa" />
          </svg>
          <Clock><T t="16:41" w={39} s={14.5} ui /><T t="2014/05/10" w={82} s={14.5} ui /></Clock>
        </Tray>
      </TaskBar>
      <Marker width="1600" height="1000" viewBox="0 0 1600 1000">
        {RINGS.map(([cx, cy, rx, ry]) => (
          <ellipse key={cx} cx={cx} cy={cy} rx={rx} ry={ry} fill="none" stroke="#ee1a1c" strokeWidth="4.300" />
        ))}
      </Marker>
    </Window>
  );
}
